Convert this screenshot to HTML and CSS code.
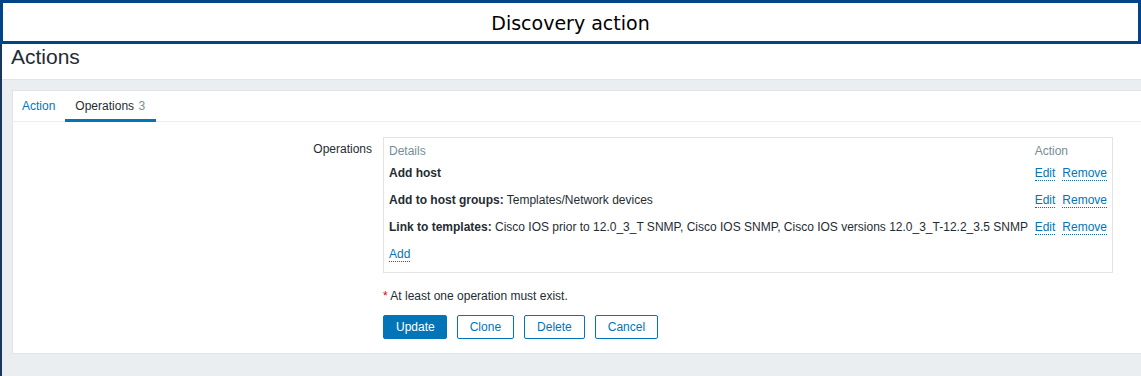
FILE: index.html
```html
<!DOCTYPE html>
<html lang="en">
<head>
    <meta charset="utf-8">
    <meta name="viewport" content="width=device-width, initial-scale=1.0">
    <title>Discovery action</title>

    <link rel="stylesheet" href="styles.css">
</head>

<body>
    <div class="banner">Discovery action</div>

    <div class="page">
        <header class="page-header">
            <h1>Actions</h1>
        </header>

        <main class="content">
            <section class="card">
                <nav class="tabs">
                    <a class="tab" href="#">Action</a>
                    <a class="tab tab-active" href="#">Operations <span class="tab-count">3</span></a>
                </nav>

                <form class="form">
                    <label class="form-label">Operations</label>
                    <div class="ops-box">
                        <table class="ops-table">
                            <thead>
                                <tr>
                                    <th>Details</th>
                                    <th class="col-action">Action</th>
                                </tr>
                            </thead>
                            <tbody>
                                <tr>
                                    <td><b>Add host</b></td>
                                    <td class="col-action"><a class="link" href="#">Edit</a><a class="link" href="#">Remove</a></td>
                                </tr>
                                <tr>
                                    <td><b>Add to host groups:</b> Templates/Network devices</td>
                                    <td class="col-action"><a class="link" href="#">Edit</a><a class="link" href="#">Remove</a></td>
                                </tr>
                                <tr>
                                    <td><b>Link to templates:</b> Cisco IOS prior to 12.0_3_T SNMP, Cisco IOS SNMP, Cisco IOS versions 12.0_3_T-12.2_3.5 SNMP</td>
                                    <td class="col-action"><a class="link" href="#">Edit</a><a class="link" href="#">Remove</a></td>
                                </tr>
                                <tr>
                                    <td colspan="2"><a class="link" href="#">Add</a></td>
                                </tr>
                            </tbody>
                        </table>
                    </div>

                    <div></div>
                    <div class="form-note"><span class="required">*</span> At least one operation must exist.</div>

                    <div></div>
                    <div class="form-buttons">
                        <button type="button" class="btn btn-main">Update</button>
                        <button type="button" class="btn">Clone</button>
                        <button type="button" class="btn">Delete</button>
                        <button type="button" class="btn">Cancel</button>
                    </div>
                </form>
            </section>
        </main>
    </div>
</body>
</html>
```

FILE: styles.css
```css
html, body {
    margin: 0;
    height: 100%;
}

body {
    background-color: #ebeef0;
    font-family: "Liberation Sans", Arial, sans-serif;
    font-size: 12px;
    line-height: 14px;
    color: #1f2c33;
    overflow: hidden;
}

/* window title */
.banner {
    height: 36px;
    padding-top: 2px;
    line-height: 36px;
    border: 3px solid #01448a;
    background-color: white;
    text-align: center;
    font-family: "DejaVu Sans", sans-serif;
    font-size: 19px;
    color: black;
}

.page {
    border-left: 2px solid #17375e;
    height: calc(100% - 44px);
}

.page-header {
    background-color: white;
    border-bottom: 1px solid #dfe4e7;
    padding: 1px 10px 10px 9px;
}

.page-header h1 {
    margin: 0;
    font-size: 21px;
    line-height: 24px;
    font-weight: normal;
}

.content {
    padding: 10px 0 0 10px;
}

.card {
    background-color: white;
    border: 1px solid #dfe4e7;
    border-right: none;
}

/* tabs */
.tabs {
    display: flex;
    border-bottom: 1px solid #ebeef0;
    margin-left: -1px;
}

.tab {
    padding: 8px 10px 6px;
    border-bottom: 3px solid transparent;
    margin-bottom: -1px;
    color: #0275b8;
    text-decoration: none;
}

.tab-active {
    color: #1f2c33;
    border-bottom-color: #0275b8;
    padding-right: 11px;
}

.tab-count {
    color: #768d99;
    margin-left: 1px;
}

/* form */
.form {
    display: grid;
    grid-template-columns: 359px 730px;
    column-gap: 11px;
    padding: 15px 0 14px;
}

.form-label {
    text-align: right;
    padding-top: 5px;
}

.ops-box {
    border: 1px solid #dfe4e7;
    padding: 0 5px 5px;
}

.ops-table {
    width: 100%;
    border-collapse: collapse;
}

.ops-table th {
    text-align: left;
    font-weight: normal;
    color: #768d99;
    padding: 6px 0 1px;
}

.ops-table td {
    padding: 7px 0 6px;
    vertical-align: top;
}

.col-action {
    width: 1%;
    white-space: nowrap;
}

.ops-table th.col-action, .ops-table td.col-action {
    padding-left: 6px;
}

.link {
    color: #0275b8;
    text-decoration: none;
    border-bottom: 1px dotted #0275b8;
}

.col-action .link + .link {
    margin-left: 7px;
}

.form-note {
    margin-top: 16px;
}

.required {
    color: #dc0000;
}

.form-buttons {
    display: flex;
    gap: 10px;
    margin-top: 12px;
}

.btn {
    height: 24px;
    padding: 0 12px;
    border: 1px solid #0275b8;
    border-radius: 2px;
    background-color: white;
    color: #0275b8;
    font-family: "Liberation Sans", Arial, sans-serif;
    font-size: 12px;
}

.btn-main {
    padding: 0 11px 0 12px;
    background-color: #0275b8;
    color: white;
}
```
